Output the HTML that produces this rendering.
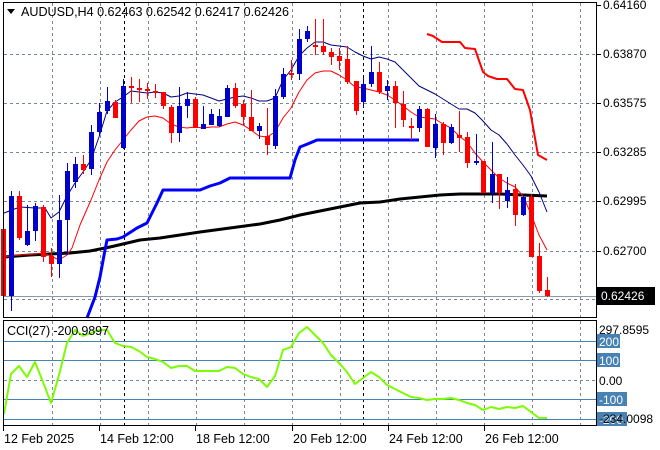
<!DOCTYPE html>
<html><head><meta charset="utf-8"><style>
html,body{margin:0;padding:0;background:#fff;width:660px;height:450px;overflow:hidden}
svg{display:block}
text{font-family:"Liberation Sans",sans-serif;font-size:12px;fill:#000}
</style></head><body>
<svg id="s" width="660" height="450" xmlns="http://www.w3.org/2000/svg">
<g id="grid" stroke="#778899" stroke-width="1" stroke-dasharray="3,3" fill="none"></g>
<line x1="4" y1="296.5" x2="597" y2="296.5" stroke="#8899aa"/>
<g id="ind" fill="none"></g>
<g id="cdl"></g>
<g id="sub" fill="none"></g>
<rect x="3.5" y="2.5" width="593" height="315" fill="none" stroke="#000"/>
<rect x="3.5" y="320.5" width="593" height="105" fill="none" stroke="#000"/>
<g id="lbl"></g>
<polygon points="7,9 15,9 11,14" fill="#000"/>
<text x="21" y="16" style="font-size:12.6px" textLength="268">AUDUSD,H4  0.62463 0.62542 0.62417 0.62426</text>
<text x="7" y="335" style="font-size:12.6px" textLength="102">CCI(27) -200.9897</text>
</svg>
<script>
const NS="http://www.w3.org/2000/svg";
function el(p,t,a){const e=document.createElementNS(NS,t);for(const k in a)e.setAttribute(k,a[k]);document.getElementById(p).appendChild(e);return e;}
[52,100,148,196,244,292,340,388,436,484,532,580].forEach(x=>{el('grid','line',{x1:x+.5,y1:3,x2:x+.5,y2:317});el('grid','line',{x1:x+.5,y1:321,x2:x+.5,y2:425});});
[54,103,152,201,251,299].forEach(y=>el('grid','line',{x1:4,y1:y+.5,x2:596,y2:y+.5}));
el('grid','line',{x1:4,y1:380.5,x2:596,y2:380.5});
[124,363].forEach(x=>{el('grid','line',{x1:x+.5,y1:3,x2:x+.5,y2:317,stroke:'#000'});el('grid','line',{x1:x+.5,y1:321,x2:x+.5,y2:425,stroke:'#000'});});
[341,360,399,419].forEach(y=>el('sub','line',{x1:4,y1:y+.5,x2:596,y2:y+.5,stroke:'#4682b4'}));
function pl(pts,c,w){el('ind','polyline',{points:pts.map(p=>p.join(',')).join(' '),stroke:c,'stroke-width':w,'stroke-linejoin':'round'});}
pl([[4,257],[30,255],[50,254],[70,253],[90,251],[110,247],[123,244],[140,240],[160,238],[180,235],[200,232],[230,228],[260,224],[280,220],[300,215],[320,211],[340,207],[360,203],[380,202],[400,199],[420,197],[440,195],[460,194],[500,194],[547,196]],'#000',3);
pl([[87,318],[95,297],[100,277],[105,250],[107,240],[117,239],[123,237],[137,228],[147,223],[157,203],[163,190],[200,190],[210,186],[220,183],[230,178],[290,178],[295,160],[300,147],[310,143],[317,140],[419,140]],'#0000ff',3);
pl([[427,34],[433,36],[442,42],[460,42],[465,48],[475,49],[483,72],[488,76],[497,79],[507,79],[515,89],[523,90],[530,110],[538,155],[547,160]],'#ff0000',2);
pl([[4,213],[20,207],[35,208],[45,208],[51,218],[59,212],[67,196],[75,183],[83,172],[91,160],[99,137],[107,111],[115,102],[123,97],[131,91],[139,92],[147,93],[155,92],[163,93],[171,97],[179,96],[187,93],[195,94],[203,95],[211,98],[219,101],[227,99],[235,97],[243,96],[251,98],[259,101],[267,101],[275,98],[283,80],[291,70],[299,56],[307,48],[315,42],[323,42],[331,45],[339,46],[347,47],[355,52],[363,56],[371,59],[379,57],[387,59],[395,62],[403,70],[411,78],[419,86],[427,90],[435,94],[443,99],[451,104],[459,109],[467,109],[475,113],[483,121],[491,130],[499,135],[507,144],[515,155],[523,165],[531,176],[539,192],[547,212]],'#000080',1);
pl([[4,257],[20,255],[35,254],[43,253],[51,256],[59,260],[67,255],[72,248],[80,225],[91,200],[99,180],[107,162],[115,150],[123,140],[131,130],[139,121],[147,117],[155,116],[163,118],[171,124],[179,127],[187,128],[195,127],[203,128],[211,127],[219,127],[227,124],[235,122],[243,125],[251,130],[259,136],[267,137],[275,132],[283,118],[291,108],[299,92],[307,80],[315,73],[323,71],[331,71],[339,75],[347,80],[355,87],[363,88],[371,90],[379,92],[387,95],[395,100],[403,106],[411,112],[419,117],[427,118],[435,119],[443,124],[451,128],[459,136],[467,142],[475,153],[483,162],[491,170],[499,178],[507,183],[515,187],[523,196],[531,214],[539,235],[547,250]],'#ff0000',1);
const C=[[3,229,296,225,305],[11,296,196,191,311],[19,196,238,191,240],[27,245,231,205,246],[35,231,206,203,241],[43,207,257,205,262],[51,256,264,248,277],[59,264,220,195,278],[67,220,171,163,255],[75,182,164,157,188],[83,164,170,155,174],[91,169,132,125,175],[99,132,112,103,135],[107,111,101,87,114],[115,102,118,100,118],[123,148,86,79,149],[131,86,88,77,103],[139,88,89,79,102],[147,89,91,83,99],[155,91,93,84,98],[163,92,106,92,109],[171,107,133,105,143],[179,133,106,87,142],[187,106,99,92,118],[195,99,128,97,128],[203,129,124,106,129],[211,125,114,109,125],[219,126,116,109,127],[227,117,88,85,117],[235,88,106,83,108],[243,104,117,100,125],[251,117,131,90,131],[259,131,126,123,139],[267,136,145,108,155],[275,146,96,89,149],[283,97,74,68,99],[291,73,75,60,80],[299,74,39,29,80],[307,39,31,26,42],[315,45,46,19,55],[323,46,52,19,55],[331,52,57,48,65],[339,56,61,48,70],[347,59,82,46,84],[356,81,111,81,115],[363,102,84,78,107],[371,84,72,46,87],[379,72,92,62,94],[387,91,86,80,100],[395,86,103,81,128],[403,104,120,91,127],[411,126,128,118,140],[419,128,109,106,132],[427,109,147,108,147],[435,148,124,114,158],[443,124,143,122,155],[451,143,127,124,144],[459,135,138,111,152],[467,137,163,132,168],[476,163,161,134,165],[483,161,193,161,193],[492,193,174,142,203],[499,174,193,174,209],[507,201,190,177,208],[515,189,215,184,226],[523,215,197,196,216],[531,197,257,194,257],[539,256,291,243,293],[547,290,296,277,297]];
C.forEach(c=>{const [x,o,cl,h,l]=c;const col=cl<o?'#0000cc':'#ff0000';
el('cdl','rect',{x:x,y:h,width:1,height:l-h,fill:col});
const t=Math.min(o,cl),b=Math.max(o,cl);el('cdl','rect',{x:x-2,y:t,width:5,height:Math.max(2,b-t),fill:col});});
el('sub','polyline',{points:"4,414 11,374 19,366 27,377 35,362 43,382 51,403 59,375 67,343 75,330 83,336 91,333 99,330 107,330 115,343 123,346 131,347 139,351 147,357 155,359 163,362 171,368 179,366 187,366 195,371 203,371 211,371 219,371 227,367 235,368 243,374 251,377 259,379 267,387 275,376 283,350 291,347 299,333 307,327 315,335 323,343 331,355 339,363 347,372 355,384 363,378 371,372 379,377 387,385 395,389 403,393 411,397 419,398 427,400 435,399 443,399 451,398 459,400 467,403 475,405 483,410 491,407 499,409 507,407 515,408 523,406 531,412 539,418 547,418",stroke:'#7cfc00','stroke-width':2,'stroke-linejoin':'round'});
function tx(x,y,s,f){const e=el('lbl','text',{x:x,y:y});e.textContent=s;if(f)e.setAttribute('style','fill:'+f);return e;}
[[5,'0.64160'],[54,'0.63870'],[103,'0.63575'],[152,'0.63285'],[201,'0.62995'],[251,'0.62700']].forEach(a=>{el('lbl','line',{x1:597,y1:a[0]+.5,x2:601,y2:a[0]+.5,stroke:'#000'});tx(603,a[0]+4,a[1]);});
el('lbl','rect',{x:597,y:287,width:58,height:18,fill:'#000'});tx(601,300,'0.62426','#fff');
tx(599,334,'297.8595');
[[341,'200'],[360,'100'],[399,'-100'],[419,'-200']].forEach(a=>{const w=a[1].length*7+2;el('lbl','rect',{x:597,y:a[0]-7,width:w,height:14,fill:'#4682b4'});tx(599,a[0]+5,a[1],'#fff');});
tx(599,423,'-234.0098');
tx(599,385,'0.00');
[[3,'12 Feb 2025'],[99,'14 Feb 12:00'],[195,'18 Feb 12:00'],[292,'20 Feb 12:00'],[388,'24 Feb 12:00'],[484,'26 Feb 12:00']].forEach(a=>{el('lbl','line',{x1:a[0]+.5,y1:426,x2:a[0]+.5,y2:431,stroke:'#000'});tx(a[0]+1,443,a[1]).setAttribute('style','font-size:12.5px');});
</script>
</body></html>
